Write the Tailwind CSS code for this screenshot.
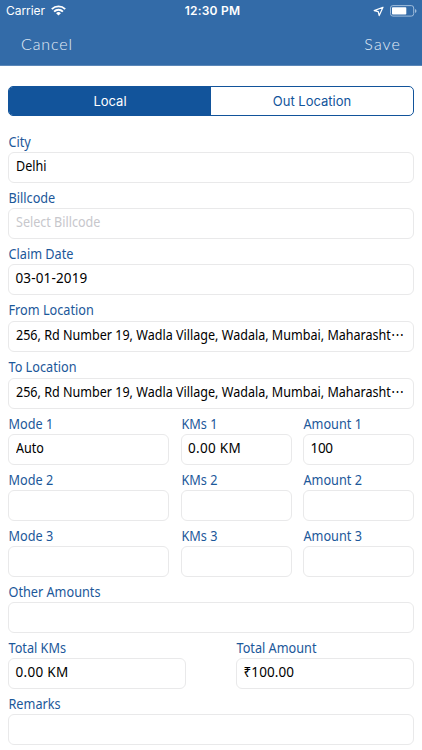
<!DOCTYPE html>
<html lang="en">
<head>
<meta charset="utf-8">
<title>Claim</title>
<script src="https://cdn.jsdelivr.net/npm/@tailwindcss/browser@4"></script>
</head>
<body class="w-[422px] h-[750px] overflow-hidden bg-white font-['Noto_Sans',sans-serif] text-sm text-black">
<header class="h-[66px] bg-[#336ba8] border-b border-[#5b87b8] text-white">
  <div class="grid grid-cols-3 items-center h-[22px] px-[6px] font-['Inter',sans-serif] text-[12px]">
    <div class="flex items-center gap-[6px]">
      <span class="tracking-[-0.05px]">Carrier</span>
      <svg class="w-[15px] h-[11px]" viewBox="0 0 15 11" fill="none" stroke="white" stroke-width="1.9"><path d="M0.8 4.1a9.6 9.6 0 0 1 13.4 0M3.1 6.6a6.3 6.3 0 0 1 8.8 0"/><path d="M7.5 10.6L5.1 8.2a3.5 3.5 0 0 1 4.8 0z" fill="white" stroke="none"/></svg>
    </div>
    <span class="text-center font-semibold tracking-[0.2px] pl-[3px]">12:30 PM</span>
    <div class="flex items-center justify-end gap-[6px] -mr-[1px]">
      <svg class="w-[11px] h-[11px]" viewBox="0 0 11 11" fill="none" stroke="white" stroke-width="1.2" stroke-linejoin="round"><path d="M10 1.2L1.2 4.6l4 1 1 4z"/></svg>
      <svg class="w-[27px] h-[12px]" viewBox="0 0 27 12"><rect x=".5" y=".6" width="23.2" height="10.5" rx="2.4" fill="none" stroke="#9fbcdb"/><rect x="2" y="2.2" width="14.3" height="7.3" rx=".8" fill="white"/><path d="M25 4v4q1.5-.5 1.5-2T25 4z" fill="#9fbcdb"/></svg>
    </div>
  </div>
  <div class="flex justify-between items-center h-[44px] pl-[21px] pr-[21px] font-['Lato',sans-serif] font-light text-[16px] text-[#e3edf7]">
    <span class="tracking-[0.9px]">Cancel</span><span class="tracking-[1.1px]">Save</span>
  </div>
</header>
<main class="px-2 pt-[20px]">
  <div class="flex h-[30px] w-[406px] rounded-[5px] border border-[#12549b] overflow-hidden font-['Inter',sans-serif] text-[13px]">
    <div class="w-[202px] bg-[#12549b] text-white flex items-center justify-center">Local</div>
    <div class="flex-1 text-[#12549b] flex items-center justify-center">Out Location</div>
  </div>
  <form class="pt-[11px] w-[406px] [&_label]:block [&_label]:h-[25px] [&_label]:pt-[5px] [&_label]:pl-[0.5px] [&_label]:leading-5 [&_label]:text-[13.5px] [&_label]:origin-left [&_label]:scale-x-[0.94] [&_label]:text-[#1c589a] [&_span]:inline-block [&_span]:origin-left [&_span]:scale-x-[0.93] [&_p]:h-[31px] [&_p]:rounded-[6px] [&_p]:border [&_p]:border-[#e9e9ea] [&_p]:pl-[6.5px] [&_p]:leading-[27px] [&_p]:text-[13.5px] [&_p]:whitespace-nowrap">
    <div><label>City</label><p><span>Delhi</span></p></div>
    <div><label>Billcode</label><p class="text-[#c7c7cc]"><span>Select Billcode</span></p></div>
    <div><label>Claim Date</label><p class="tracking-[0.15px]">03-01-2019</p></div>
    <div><label>From Location</label><p class="mt-px"><span>256, Rd Number 19, Wadla Village, Wadala, Mumbai, Maharasht⋯</span></p></div>
    <div><label>To Location</label><p class="mt-px"><span>256, Rd Number 19, Wadla Village, Wadala, Mumbai, Maharasht⋯</span></p></div>
    <div class="grid grid-cols-[161px_111px_111px] justify-between">
      <div><label>Mode 1</label><p><span>Auto</span></p></div>
      <div><label>KMs 1</label><p class="tracking-[0.3px]">0.00 KM</p></div>
      <div><label>Amount 1</label><p class="tracking-[-0.3px]">100</p></div>
      <div><label>Mode 2</label><p></p></div>
      <div><label>KMs 2</label><p></p></div>
      <div><label>Amount 2</label><p></p></div>
      <div><label>Mode 3</label><p></p></div>
      <div><label>KMs 3</label><p></p></div>
      <div><label>Amount 3</label><p></p></div>
    </div>
    <div><label>Other Amounts</label><p></p></div>
    <div class="grid grid-cols-[178px_178px] justify-between">
      <div><label>Total KMs</label><p class="tracking-[0.3px]">0.00 KM</p></div>
      <div><label>Total Amount</label><p class="tracking-[0.1px]">₹100.00</p></div>
    </div>
    <div><label>Remarks</label><p></p></div>
  </form>
</main>
</body>
</html>
